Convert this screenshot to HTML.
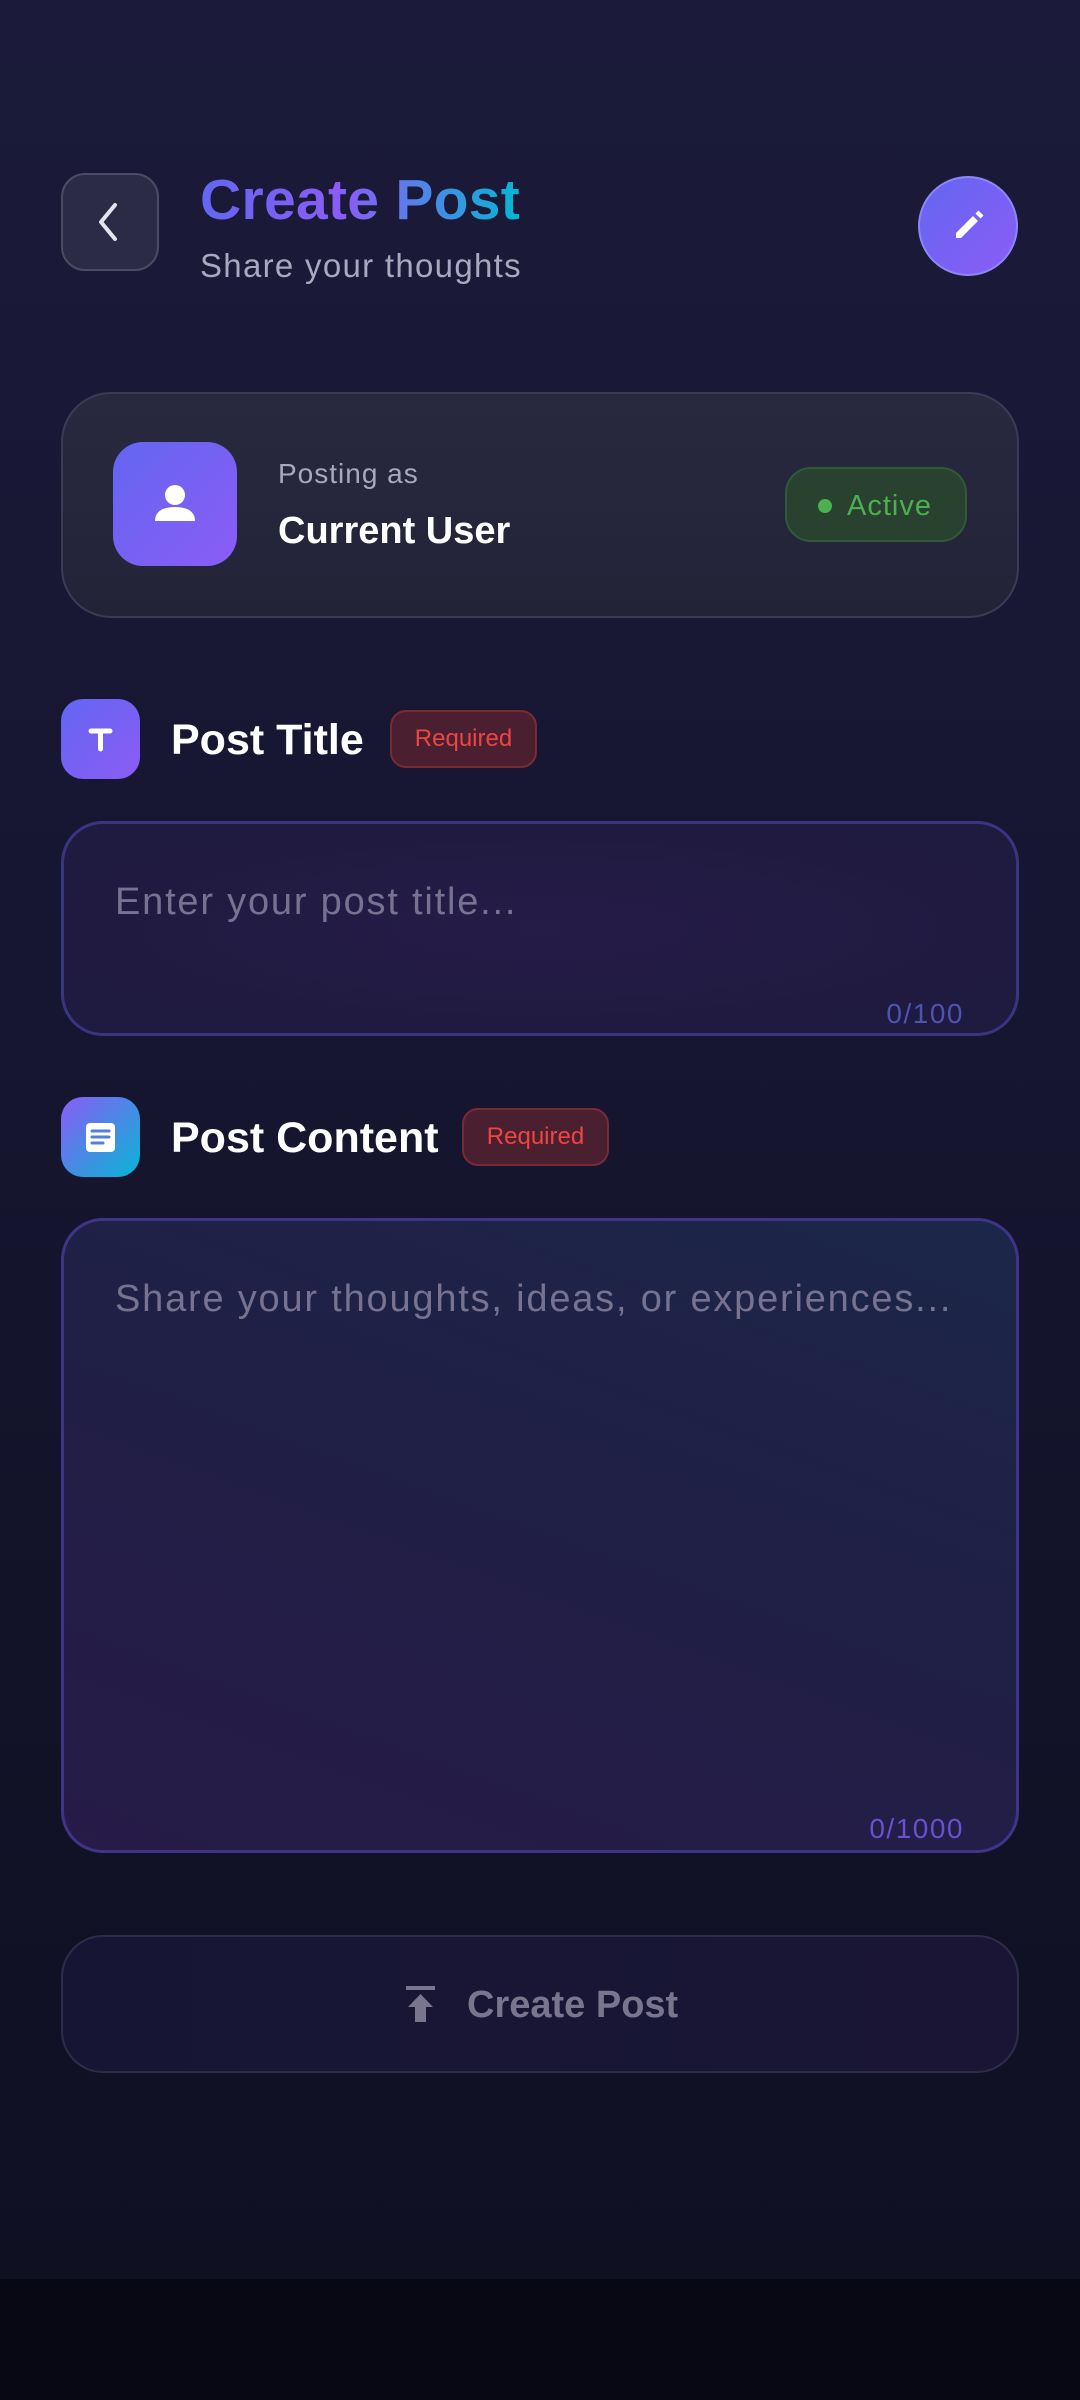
<!DOCTYPE html>
<html><head><meta charset="utf-8"><style>
*{margin:0;padding:0;box-sizing:border-box}
body{width:1080px;height:2400px;overflow:hidden;font-family:"Liberation Sans",sans-serif;background:linear-gradient(180deg,#1b1a3a 0%,#161631 40%,#121228 70%,#0f1022 100%);position:relative;color:#fff}
.a{position:absolute}
.back{left:61px;top:173px;width:98px;height:98px;border-radius:24px;background:#2c2b45;border:2px solid #4c4b63}
.title{left:200px;top:167px;font-size:57px;font-weight:bold;background:linear-gradient(90deg,#6366f1,#8b5cf6 45%,#06b6d4);-webkit-background-clip:text;background-clip:text;color:transparent;letter-spacing:0.3px}
.sub{left:200px;top:247px;font-size:33px;color:#a9a8bd;letter-spacing:1.3px}
.edit{left:918px;top:176px;width:100px;height:100px;border-radius:50%;background:linear-gradient(135deg,#6366f1,#8b5cf6);border:2px solid #8f86f5}
.card{left:61px;top:392px;width:958px;height:226px;border-radius:50px;background:linear-gradient(180deg,#28283f,#232338);border:2px solid #3c3b55}
.av{left:113px;top:442px;width:124px;height:124px;border-radius:30px;background:linear-gradient(135deg,#6366f1,#8b5cf6)}
.pill{left:785px;top:467px;width:182px;height:75px;border-radius:26px;background:#29412f;border:2px solid #2f5a3a}
.ic{width:79px;height:80px;border-radius:22px}
.lbl{font-size:43px;font-weight:bold;color:#fff}
.req{height:58px;border-radius:16px;background:#4a2030;border:2px solid #7a2a35;color:#ef4444;font-size:24px;text-align:center;line-height:54px;width:147px}
.inp{left:61px;width:958px;border-radius:42px;border:3px solid #3a3580;background:radial-gradient(ellipse at 50% 50%,#251c48,#1f1a3f 80%)}
.ph{font-size:38px;color:#77728f;letter-spacing:1.8px}
.cnt{font-size:28px;color:#4f53b0;letter-spacing:1.5px}
</style></head><body>
<div class="a back"><svg width="94" height="94" viewBox="0 0 94 94"><path d="M52 30 L38 47 L52 64" fill="none" stroke="#e4e4ee" stroke-width="4" stroke-linecap="round" stroke-linejoin="round"/></svg></div>
<div class="a title">Create Post</div>
<div class="a sub">Share your thoughts</div>
<div class="a edit"><svg width="96" height="96" viewBox="0 0 96 96"><path d="M36 60 L36 55 L53 38 L58 43 L41 60 Z M55.5 35.5 L58.5 32.5 L63.5 37.5 L60.5 40.5 Z" fill="#fff"/></svg></div>
<div class="a card"></div>
<div class="a av"><svg width="124" height="124" viewBox="0 0 124 124"><circle cx="62" cy="53" r="10" fill="#fff"/><path d="M42 79 C42 68 52 65 62 65 C72 65 82 68 82 79 Z" fill="#fff"/></svg></div>
<div class="a" style="left:278px;top:458px;font-size:28px;color:#a9a8bd;letter-spacing:1px">Posting as</div>
<div class="a" style="left:278px;top:510px;font-size:38px;font-weight:bold">Current User</div>
<div class="a pill"><div class="a" style="left:31px;top:30px;width:14px;height:14px;border-radius:50%;background:#4caf50"></div><div class="a" style="left:60px;top:21px;font-size:29px;color:#4caf50;letter-spacing:1px">Active</div></div>

<div class="a ic" style="left:61px;top:699px;background:linear-gradient(135deg,#6366f1,#8b5cf6)"><svg width="79" height="80" viewBox="0 0 79 80"><path d="M30 32 H49 M39.5 32 V50" stroke="#fff" stroke-width="5" stroke-linecap="round" fill="none"/></svg></div>
<div class="a lbl" style="left:171px;top:716px">Post Title</div>
<div class="a req" style="left:390px;top:710px">Required</div>
<div class="a inp" style="top:821px;height:215px"><div class="a ph" style="left:51px;top:57px">Enter your post title...</div><div class="a cnt" style="right:52px;top:174px">0/100</div></div>

<div class="a ic" style="left:61px;top:1097px;background:linear-gradient(135deg,#8b5cf6,#06b6d4)"><svg width="79" height="80" viewBox="0 0 79 80"><rect x="25" y="26" width="29" height="29" rx="4" fill="#fff"/><path d="M31 34 H48 M31 40 H48 M31 46 H42" stroke="#4f7fe0" stroke-width="3" stroke-linecap="round"/></svg></div>
<div class="a lbl" style="left:171px;top:1114px">Post Content</div>
<div class="a req" style="left:462px;top:1108px">Required</div>
<div class="a inp" style="top:1218px;height:635px;border-color:#3f3488;background:linear-gradient(200deg,#1b2748 0%,#201f46 45%,#271b48 100%)"><div class="a ph" style="left:51px;top:57px">Share your thoughts, ideas, or experiences...</div><div class="a cnt" style="right:52px;top:592px;color:#6a4fd0">0/1000</div></div>

<div class="a" style="left:61px;top:1935px;width:958px;height:138px;border-radius:42px;background:linear-gradient(90deg,#161634,#1a1535);border:2px solid #2e2c48"></div>
<svg class="a" style="left:402px;top:1984px" width="38" height="40" viewBox="0 0 38 40"><rect x="4" y="2" width="29" height="4" fill="#78758c"/><path d="M18.5 10 L31 23 H24 V38 H13 V23 H6 Z" fill="#78758c"/></svg>
<div class="a" style="left:467px;top:1984px;font-size:38px;font-weight:bold;color:#78758c">Create Post</div>
<div class="a" style="left:0;top:2279px;width:1080px;height:121px;background:#080815"></div>
</body></html>
